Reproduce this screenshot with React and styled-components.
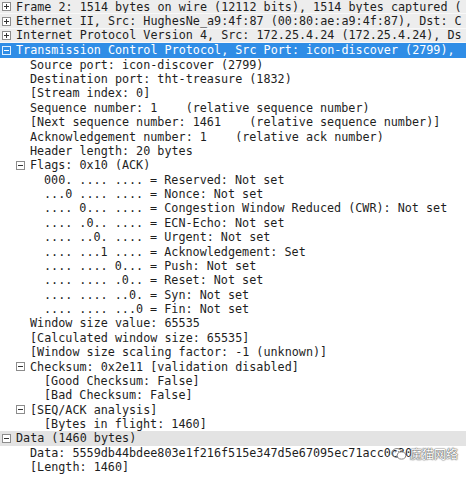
import React from 'react';
import styled, { createGlobalStyle } from 'styled-components';

const GlobalStyle = createGlobalStyle`
  html, body {
    margin: 0;
    padding: 0;
    background: #ffffff;
  }
`;

const Tree = styled.div`
  position: relative;
  width: 466px;
  height: 477px;
  overflow: hidden;
  background: #ffffff;
  font-family: "DejaVu Sans Mono", "Liberation Mono", monospace;
  font-size: 11.75px;
  color: #1e1e1e;
`;

const Row = styled.div`
  display: flex;
  align-items: center;
  height: 14.375px;
  padding-left: ${p => 2 + p.level * 14}px;
  white-space: pre;
  overflow: hidden;
  background: ${p => (p.variant === 'selected' ? '#2f8de6' : p.variant === 'top' ? '#ededed' : p.variant === 'data' ? '#e3e3e3' : 'transparent')};
  color: ${p => (p.variant === 'selected' ? '#ffffff' : '#1e1e1e')};
  border-bottom: ${p => (p.variant === 'top' ? '1px solid #f8f8f8' : 'none')};
  box-sizing: border-box;
`;

const ExpanderSlot = styled.span`
  display: inline-flex;
  align-items: center;
  justify-content: flex-start;
  width: 14px;
  flex: none;
`;

const Label = styled.span`
  line-height: 14px;
`;

const Watermark = styled.div`
  position: absolute;
  right: 8px;
  top: 445px;
  display: flex;
  align-items: center;
  gap: 3px;
  font-family: "Noto Sans CJK SC", sans-serif;
  font-size: 12px;
  color: #ffffff;
  text-shadow: 0 0 1px #555, 0 0 1px #555, 0 0 2px #888;
`;

function Expander({ open, light }) {
  const stroke = light ? '#dfefff' : '#8c8c8c';
  const fill = light ? '#2f8de6' : '#ffffff';
  const mark = light ? '#ffffff' : '#333333';
  return (
    <svg width="9" height="9" viewBox="0 0 9 9">
      <rect x="0.5" y="0.5" width="8" height="8" fill={fill} stroke={stroke} />
      <line x1="2" y1="4.5" x2="7" y2="4.5" stroke={mark} />
      {!open && <line x1="4.5" y1="2" x2="4.5" y2="7" stroke={mark} />}
    </svg>
  );
}

function WechatIcon() {
  return (
    <svg width="16" height="14" viewBox="0 0 16 14">
      <ellipse cx="6" cy="6" rx="5.2" ry="4.5" fill="none" stroke="#888" strokeWidth="1" />
      <ellipse cx="10.5" cy="8.5" rx="4.2" ry="3.6" fill="#fff" stroke="#888" strokeWidth="1" />
      <circle cx="4.3" cy="4.8" r="0.7" fill="#888" />
      <circle cx="7.6" cy="4.8" r="0.7" fill="#888" />
    </svg>
  );
}

// level = depth of the text; exp rows put their box one step left of the text
const rows = [
  { level: 1, exp: 'plus', variant: 'top', text: 'Frame 2: 1514 bytes on wire (12112 bits), 1514 bytes captured (' },
  { level: 1, exp: 'plus', variant: 'top', text: 'Ethernet II, Src: HughesNe_a9:4f:87 (00:80:ae:a9:4f:87), Dst: C' },
  { level: 1, exp: 'plus', variant: 'top', text: 'Internet Protocol Version 4, Src: 172.25.4.24 (172.25.4.24), Ds' },
  { level: 1, exp: 'minus', variant: 'selected', text: 'Transmission Control Protocol, Src Port: icon-discover (2799), ' },
  { level: 2, text: 'Source port: icon-discover (2799)' },
  { level: 2, text: 'Destination port: tht-treasure (1832)' },
  { level: 2, text: '[Stream index: 0]' },
  { level: 2, text: 'Sequence number: 1    (relative sequence number)' },
  { level: 2, text: '[Next sequence number: 1461    (relative sequence number)]' },
  { level: 2, text: 'Acknowledgement number: 1    (relative ack number)' },
  { level: 2, text: 'Header length: 20 bytes' },
  { level: 2, exp: 'minus', text: 'Flags: 0x10 (ACK)' },
  { level: 3, text: '000. .... .... = Reserved: Not set' },
  { level: 3, text: '...0 .... .... = Nonce: Not set' },
  { level: 3, text: '.... 0... .... = Congestion Window Reduced (CWR): Not set' },
  { level: 3, text: '.... .0.. .... = ECN-Echo: Not set' },
  { level: 3, text: '.... ..0. .... = Urgent: Not set' },
  { level: 3, text: '.... ...1 .... = Acknowledgement: Set' },
  { level: 3, text: '.... .... 0... = Push: Not set' },
  { level: 3, text: '.... .... .0.. = Reset: Not set' },
  { level: 3, text: '.... .... ..0. = Syn: Not set' },
  { level: 3, text: '.... .... ...0 = Fin: Not set' },
  { level: 2, text: 'Window size value: 65535' },
  { level: 2, text: '[Calculated window size: 65535]' },
  { level: 2, text: '[Window size scaling factor: -1 (unknown)]' },
  { level: 2, exp: 'minus', text: 'Checksum: 0x2e11 [validation disabled]' },
  { level: 3, text: '[Good Checksum: False]' },
  { level: 3, text: '[Bad Checksum: False]' },
  { level: 2, exp: 'minus', text: '[SEQ/ACK analysis]' },
  { level: 3, text: '[Bytes in flight: 1460]' },
  { level: 1, exp: 'minus', variant: 'data', text: 'Data (1460 bytes)' },
  { level: 2, text: 'Data: 5559db44bdee803e1f216f515e347d5e67095ec71acc0c30' },
  { level: 2, text: '[Length: 1460]' },
];

export default function App() {
  return (
    <>
      <GlobalStyle />
      <Tree>
        {rows.map((r, i) => (
          <Row key={i} level={r.level - 1} variant={r.variant}>
            <ExpanderSlot>
              {r.exp && <Expander open={r.exp === 'minus'} light={r.variant === 'selected'} />}
            </ExpanderSlot>
            <Label>{r.text}</Label>
          </Row>
        ))}
        <Watermark>
          <WechatIcon />
          <span>魔猫网络</span>
        </Watermark>
      </Tree>
    </>
  );
}
